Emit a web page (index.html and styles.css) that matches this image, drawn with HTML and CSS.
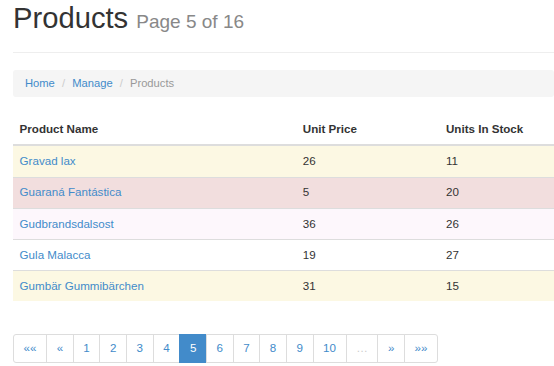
FILE: index.html
```html
<!DOCTYPE html>
<html lang="en">
<head>
    <meta charset="UTF-8">
    <meta name="viewport" content="width=device-width, initial-scale=1.0">
    <title>Products</title>
    <link rel="stylesheet" href="styles.css">
</head>
<body>
    <div class="container">
        <div class="page-header">
            <h1>Products <small>Page 5 of 16</small></h1>
        </div>

        <ol class="breadcrumb">
            <li><a href="#">Home</a></li>
            <li><a href="#">Manage</a></li>
            <li class="active">Products</li>
        </ol>

        <table class="table">
            <thead>
                <tr>
                    <th class="col-name">Product Name</th>
                    <th class="col-price">Unit Price</th>
                    <th>Units In Stock</th>
                </tr>
            </thead>
            <tbody>
                <tr class="warning">
                    <td><a href="#">Gravad lax</a></td>
                    <td>26</td>
                    <td>11</td>
                </tr>
                <tr class="danger">
                    <td><a href="#">Guaraná Fantástica</a></td>
                    <td>5</td>
                    <td>20</td>
                </tr>
                <tr class="light">
                    <td><a href="#">Gudbrandsdalsost</a></td>
                    <td>36</td>
                    <td>26</td>
                </tr>
                <tr>
                    <td><a href="#">Gula Malacca</a></td>
                    <td>19</td>
                    <td>27</td>
                </tr>
                <tr class="warning">
                    <td><a href="#">Gumbär Gummibärchen</a></td>
                    <td>31</td>
                    <td>15</td>
                </tr>
            </tbody>
        </table>

        <ul class="pagination">
            <li><a href="#" class="small-arrow">&laquo;&laquo;</a></li>
            <li><a href="#" class="small-arrow">&laquo;</a></li>
            <li><a href="#">1</a></li>
            <li><a href="#">2</a></li>
            <li><a href="#">3</a></li>
            <li><a href="#">4</a></li>
            <li class="active"><a href="#">5</a></li>
            <li><a href="#">6</a></li>
            <li><a href="#">7</a></li>
            <li><a href="#">8</a></li>
            <li><a href="#">9</a></li>
            <li><a href="#">10</a></li>
            <li class="disabled"><a href="#">&hellip;</a></li>
            <li><a href="#" class="small-arrow">&raquo;</a></li>
            <li><a href="#" class="small-arrow">&raquo;&raquo;</a></li>
        </ul>
    </div>
</body>
</html>
```

FILE: styles.css
```css
html, body {
    overflow: hidden;
}
body {
    margin: 0;
    font-family: "Liberation Sans", Arial, sans-serif;
    font-size: 11.6px;
    line-height: 16.6px;
    color: #333;
    background: #fff;
}
a {
    color: #428bca;
    text-decoration: none;
}
.container {
    padding-left: 13px;
}
.page-header {
    margin: 0 0 17px;
    padding-bottom: 7px;
    border-bottom: 1px solid #eee;
}
h1 {
    margin: 2px 0 5.8px;
    font-size: 29.2px;
    line-height: 32.9px;
    font-weight: normal;
    color: #333;
}
h1 small {
    font-size: 19px;
    color: #888;
}
.breadcrumb {
    margin: 0 0 17px;
    padding: 5.5px 12px;
    list-style: none;
    background: #f5f5f5;
    border-radius: 3px;
    font-size: 11.2px;
}
.breadcrumb li {
    display: inline-block;
}
.breadcrumb li + li:before {
    content: "/\00a0";
    padding: 0 4px;
    color: #ccc;
}
.breadcrumb .active {
    color: #999;
}
.table {
    width: 100%;
    border-collapse: collapse;
    border-spacing: 0;
    margin-bottom: 16px;
}
.table th, .table td {
    padding: 6.8px 6.6px;
    text-align: left;
    vertical-align: top;
    border-top: 1px solid #ddd;
}
.table th {
    font-weight: bold;
    border-top: 0;
    border-bottom: 2px solid #ddd;
}
.col-name {
    width: 270px;
}
.col-price {
    width: 130px;
}
.warning td {
    background: #fcf8e3;
}
.danger td {
    background: #f2dede;
}
.light td {
    background: #fdf7fc;
}
.pagination {
    display: inline-flex;
    margin: 16.6px 0;
    padding: 0;
    list-style: none;
}
.pagination a {
    display: block;
    padding: 5px 9.6px;
    margin-left: -1px;
    border: 1px solid #ddd;
    background: #fff;
    color: #428bca;
}
.pagination li:first-child a {
    margin-left: 0;
    border-radius: 3px 0 0 3px;
}
.pagination li:last-child a {
    border-radius: 0 3px 3px 0;
}
.pagination .active a {
    background: #428bca;
    border-color: #428bca;
    color: #fff;
}
.pagination .disabled a {
    color: #ccc;
}
.small-arrow {
    color: #6fa6d8;
}
```
